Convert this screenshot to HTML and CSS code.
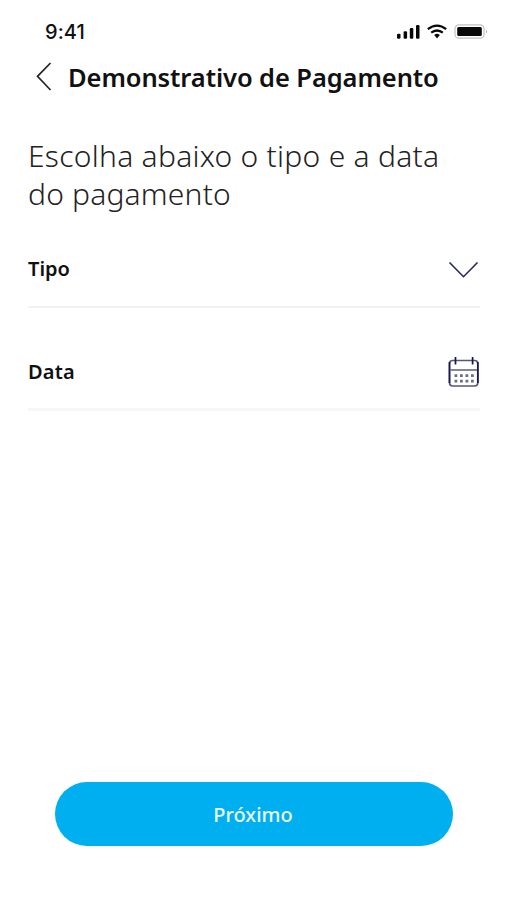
FILE: index.html
```html
<!DOCTYPE html>
<html lang="pt-BR">
<head>
<meta charset="utf-8">
<meta name="viewport" content="width=device-width, initial-scale=1">
<title>Demonstrativo de Pagamento</title>
<link rel="stylesheet" href="styles.css">
</head>
<body>
<div class="screen">
  <div class="status">
    <span class="time">9:41</span>
    <svg class="indicators" width="92" height="18" viewBox="0 0 92 18">
      <g fill="#080808">
        <rect x="1" y="10.8" width="3.5" height="4.9" rx="1.2"/>
        <rect x="7.6" y="8.3" width="3.5" height="7.4" rx="1.2"/>
        <rect x="13.8" y="5" width="3.5" height="10.7" rx="1.2"/>
        <rect x="20" y="2" width="3.5" height="13.7" rx="1.2"/>
        <path d="M38.2 11.9Q41 9.8 43.8 11.9L41 15.4Z"/>
        <rect x="61.2" y="4" width="24.6" height="9" rx="1.5"/>
      </g>
      <g fill="none" stroke="#080808" stroke-width="2.3">
        <path d="M31.8 6.2Q41-1 50.2 6.2"/>
        <path d="M35.2 9.7Q41 5.2 46.8 9.7"/>
      </g>
      <rect x="59" y="1.8" width="29" height="13.4" rx="3.8" fill="none" stroke="#c2c2c2" stroke-width="1.2"/>
      <path d="M90 6.5Q91.6 8.5 90 10.5Z" fill="#999"/>
    </svg>
  </div>
  <header class="header">
    <svg class="back" width="18" height="30" viewBox="0 0 18 30" fill="none" stroke="#252525" stroke-width="1.7"><path d="M15.5 1L2.5 14.3L15.5 28"/></svg>
    <h1 class="title">Demonstrativo de Pagamento</h1>
  </header>
  <main class="main">
    <p class="lead"><span class="lead-first">Escolha abaixo o tipo e a data</span><br><span class="lead-second">do pagamento</span></p>
    <div class="field">
      <span class="label">Tipo</span>
      <svg class="chevron" width="32" height="18" viewBox="0 0 32 18" fill="none" stroke="#25255f" stroke-width="1.6"><path d="M1.5 1.5L15.5 15.7L29.5 1.5"/></svg>
    </div>
    <div class="field field-date">
      <span class="label">Data</span>
      <svg width="32" height="32" viewBox="0 0 32 32" fill="none">
        <rect x="1.5" y="4.5" width="28.3" height="25.5" rx="3.2" stroke="#56567b" stroke-width="1.6"/>
        <path d="M1.5 6V27M29.8 6V27M7.5 1V8.5M24.6 1V8.5" stroke="#17174d" stroke-width="1.7"/>
        <path d="M2 14H29" stroke="#77778f" stroke-width="1.8"/>
        <path d="M6.5 19.6H26M6.5 25.1H26" stroke="#6d6d83" stroke-width="2.6" stroke-dasharray="2.8 2.7"/>
      </svg>
    </div>
  </main>
  <button class="next" type="button">Próximo</button>
</div>
</body>
</html>
```
FILE: styles.css
```css
* { box-sizing: border-box; }
body { margin: 0; background: #fff; }
.screen {
  height: 900px;
  display: flex;
  flex-direction: column;
  padding: 22px 26px 54px 28px;
  background: #fff;
  color: #111;
  font-family: "Noto Sans", sans-serif;
}
.status {
  height: 20px;
  display: flex;
  align-items: center;
  justify-content: space-between;
  padding-left: 17px;
  margin-right: -8px;
}
.time {
  font: 500 20px/20px Inter, sans-serif;
  letter-spacing: 0.1px;
}
.header {
  display: flex;
  align-items: center;
  gap: 15px;
  height: 36px;
  margin-top: 17px;
  padding-left: 7px;
}
.title {
  margin: 0;
  font-size: 25.5px;
  line-height: 36px;
  font-weight: 600;
  letter-spacing: -0.09px;
  white-space: nowrap;
}
.main { margin-top: 42px; }
.lead {
  margin: 0;
  font-size: 30px;
  line-height: 38px;
  font-weight: 300;
  color: #222;
  white-space: nowrap;
}
.lead-first { letter-spacing: 0.27px; }
.lead-second { letter-spacing: 0.18px; }
.field {
  display: flex;
  align-items: center;
  justify-content: space-between;
  height: 75px;
  margin-top: 20px;
  padding-bottom: 2px;
  border-bottom: 2px solid #f1f1f1;
}
.chevron { margin-top: 3px; }
.field-date {
  height: 76px;
  margin-top: 27px;
  padding-bottom: 0;
  border-bottom: 3px solid #f7f7f7;
}
.label {
  font-size: 20px;
  line-height: 28px;
  font-weight: 600;
}
.field-date .label { letter-spacing: 0.15px; }
.next {
  width: 398px;
  height: 64px;
  margin: auto 0 0 27px;
  padding: 2px 2px 0 0;
  border: 0;
  border-radius: 32px;
  background: #00aff0;
  color: #e9f9ff;
  font: 500 20px/28px "Noto Sans", sans-serif;
}
```
